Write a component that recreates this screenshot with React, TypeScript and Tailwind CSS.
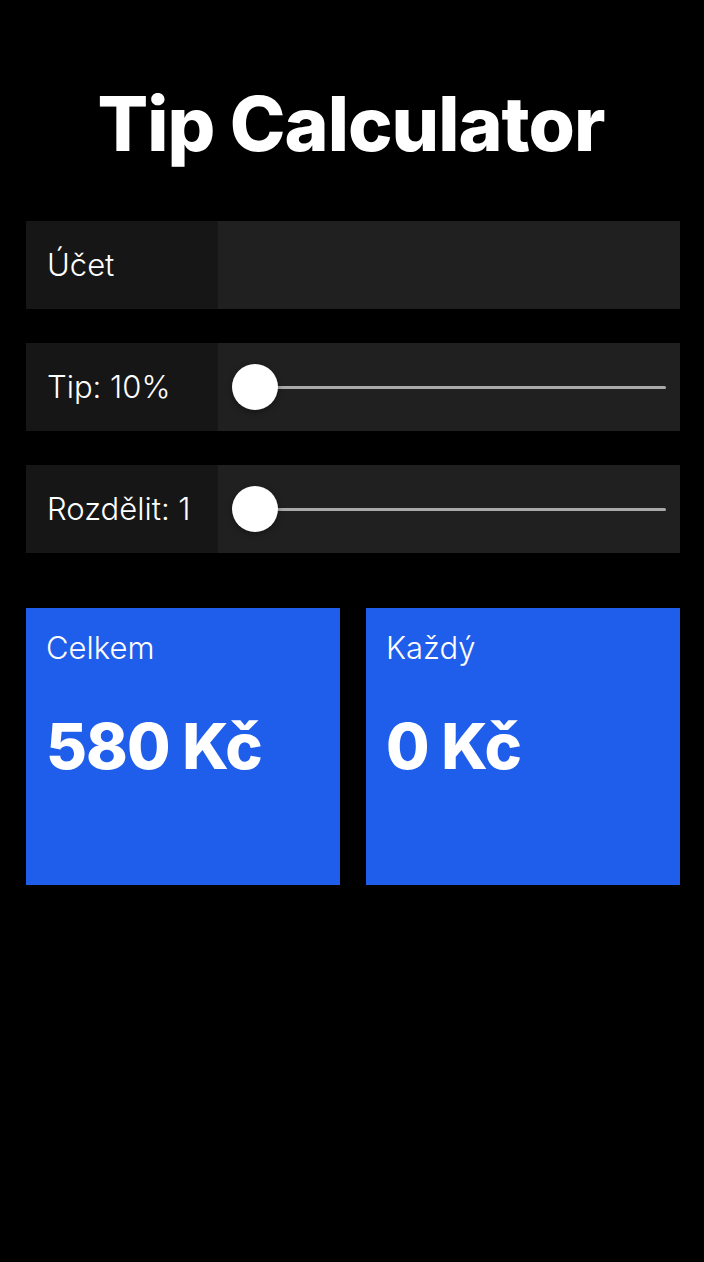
import { useState } from "react";

const font = { fontFamily: "Inter, 'Noto Sans', sans-serif" };

const Row = ({ label, children }: { label: string; children?: React.ReactNode }) => (
  <div className="flex h-[88px] w-full">
    <div className="flex w-[192px] shrink-0 items-center bg-[#161616] pl-[21px] text-[31px] font-light text-white">
      {label}
    </div>
    <div className="flex flex-1 items-center bg-[#202020] pl-[14px] pr-[14px]">{children}</div>
  </div>
);

const Slider = ({ pos }: { pos: number }) => (
  <div className="relative flex h-[48px] w-full items-center">
    <div className="ml-[23px] h-[3px] flex-1 rounded-full bg-[#a9a9a9]" />
    <div
      className="absolute top-[1px] h-[46px] w-[46px] rounded-full bg-white shadow-[0_2px_6px_rgba(0,0,0,0.35)]"
      style={{ left: `${pos}px` }}
    />
  </div>
);

const Card = ({ label, value }: { label: string; value: string }) => (
  <div className="flex h-[277px] flex-1 flex-col bg-[#1f5eeb] pl-[20px] pt-[20px] text-white">
    <div className="text-[31px] font-light leading-[40px]">{label}</div>
    <div className="mt-[40px] text-[63px] font-extrabold leading-[76px] tracking-[-1px]">{value}</div>
  </div>
);

export default function App() {
  const [tip] = useState(10);
  const [split] = useState(1);
  return (
    <div className="min-h-[1262px] w-full bg-black pl-[26px] pr-[24px]" style={font}>
      <h1 className="pt-[74px] pb-[47px] pr-[4px] text-center text-[75px] font-extrabold leading-[100px] tracking-[-1px] text-white">
        Tip Calculator
      </h1>
      <div className="flex flex-col gap-[34px]">
        <Row label="Účet" />
        <Row label={`Tip: ${tip}%`}>
          <Slider pos={0} />
        </Row>
        <Row label={`Rozdělit: ${split}`}>
          <Slider pos={0} />
        </Row>
      </div>
      <div className="mt-[55px] flex gap-[26px]">
        <Card label="Celkem" value="580 Kč" />
        <Card label="Každý" value="0 Kč" />
      </div>
    </div>
  );
}
